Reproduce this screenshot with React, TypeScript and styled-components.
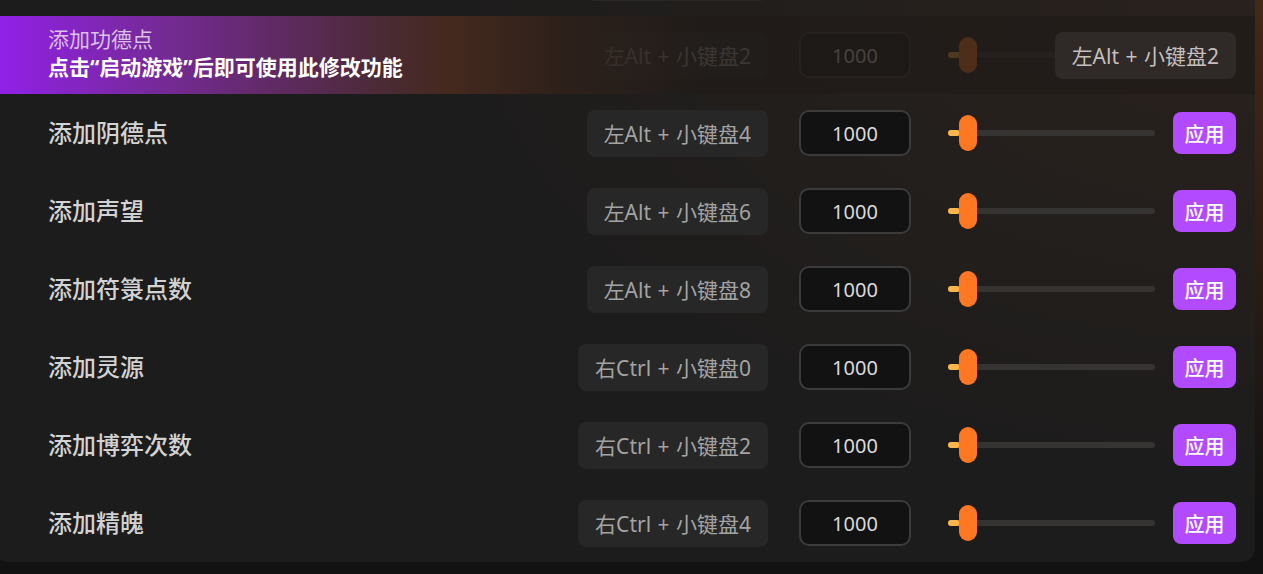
import React, { FC } from 'react';
import styled, { createGlobalStyle } from 'styled-components';

const GlobalStyle = createGlobalStyle`
	html, body {
		margin: 0;
		height: 574px;
		overflow: hidden;
	}
	body {
		font-family: "Noto Sans", "Noto Sans CJK SC", sans-serif;
		background:
			radial-gradient(ellipse 900px 520px at 100% 0%, rgba(110, 58, 28, 0.55), rgba(110, 58, 28, 0) 100%),
			#121212;
	}
`

interface Cheat {
	label: string
	hotkey: string
	value: number
}

const cheats: Cheat[] = [
	{ label: '添加修为', hotkey: '左Alt + 小键盘0', value: 1000 },
	{ label: '添加功德点', hotkey: '左Alt + 小键盘2', value: 1000 },
	{ label: '添加阴德点', hotkey: '左Alt + 小键盘4', value: 1000 },
	{ label: '添加声望', hotkey: '左Alt + 小键盘6', value: 1000 },
	{ label: '添加符箓点数', hotkey: '左Alt + 小键盘8', value: 1000 },
	{ label: '添加灵源', hotkey: '右Ctrl + 小键盘0', value: 1000 },
	{ label: '添加博弈次数', hotkey: '右Ctrl + 小键盘2', value: 1000 },
	{ label: '添加精魄', hotkey: '右Ctrl + 小键盘4', value: 1000 },
]

// index of the row the guide tooltip points at
const GUIDE_ROW = 1

const Slider: FC<{ percent: number }> = ({ percent }) => (
	<SliderWrapper>
		<div className="track" />
		<div className="fill" style={{ width: `${percent}%` }} />
		<div className="thumb" style={{ left: `calc(${percent}% - 1px)` }} />
	</SliderWrapper>
)

const App: FC = () => {
	return (
		<>
			<GlobalStyle />
			<Panel>
				{cheats.map((item, i) => (
					<Row key={i}>
						<Label>{item.label}</Label>
						<HotkeyBadge>{item.hotkey}</HotkeyBadge>
						<ValueBox>{item.value}</ValueBox>
						<Slider percent={6} />
						<ApplyButton>应用</ApplyButton>

						{i === GUIDE_ROW && (
							<GuideOverlay>
								<GuideText>
									<p className="title">{item.label}</p>
									<p className="desc">点击“启动游戏”后即可使用此修改功能</p>
								</GuideText>
								<HotkeyBadge highlight>{item.hotkey}</HotkeyBadge>
							</GuideOverlay>
						)}
					</Row>
				))}
			</Panel>
		</>
	)
}

export default App;



const Panel = styled.div`
	margin: -62px 0 0 -6px;
	width: 1261px;
	background: rgba(32, 32, 32, 0.72);
	border-radius: 0 0 14px 14px;
	overflow: hidden;
`

const Row = styled.div`
	position: relative;
	display: flex;
	align-items: center;
	height: 78px;
	padding: 0 19px 0 54px;
	box-sizing: border-box;
`

const Label = styled.div`
	flex: 1;
	padding-bottom: 3px;
	color: #d2d2d2;
	font-size: 24px;
	font-weight: 500;
	font-family: "Noto Sans CJK SC", sans-serif;
`

const HotkeyBadge = styled.div<{ highlight?: boolean }>`
	display: flex;
	align-items: center;
	height: 47px;
	padding: 0 17px;
	box-sizing: border-box;
	border-radius: 8px;
	background: ${p => p.highlight ? '#2f2a28' : '#272727'};
	color: ${p => p.highlight ? '#c4bfbc' : '#a3a3a3'};
	font-size: 21px;
	white-space: nowrap;
	word-spacing: 1px;
`

const ValueBox = styled.div`
	display: flex;
	align-items: center;
	justify-content: center;
	width: 112px;
	height: 46px;
	margin-left: 31px;
	box-sizing: border-box;
	border: 2px solid #3b3b3b;
	border-radius: 10px;
	background: #121212;
	color: #dadada;
	font-size: 20px;
`

const SliderWrapper = styled.div`
	position: relative;
	width: 207px;
	height: 36px;
	margin-left: 37px;

	& .track {
		position: absolute;
		left: 0;
		right: 0;
		top: 15px;
		height: 6px;
		border-radius: 3px;
		background: #363433;
	}

	& .fill {
		position: absolute;
		left: 0;
		top: 15px;
		height: 6px;
		border-radius: 3px;
		background: #ffb54a;
	}

	& .thumb {
		position: absolute;
		top: 0;
		width: 18px;
		height: 36px;
		border-radius: 9px;
		background: #ff7722;
	}
`

const ApplyButton = styled.button`
	width: 63px;
	height: 42px;
	margin-left: 18px;
	padding: 0;
	border: none;
	border-radius: 8px;
	background: #b24bff;
	color: #ffffff;
	font-family: "Noto Sans CJK SC", sans-serif;
	font-size: 20px;
	font-weight: 500;
	cursor: pointer;
`

const GuideOverlay = styled.div`
	position: absolute;
	inset: 0;
	display: flex;
	align-items: center;
	padding: 0 19px 0 54px;
	background: linear-gradient(90deg,
		#9220ea 0%,
		#762a98 13%,
		#5c2a5a 24%,
		#4a2a34 31%,
		#45291e 36%,
		rgba(44, 32, 26, 0.93) 46%,
		rgba(32, 27, 24, 0.8) 56%,
		rgba(32, 27, 24, 0.8) 100%);
`

const GuideText = styled.div`
	flex: 1;
	padding-bottom: 4px;
	font-family: "Noto Sans", "Noto Sans CJK SC", sans-serif;

	& p {
		margin: 0;
		line-height: 28px;
	}

	& .title {
		color: rgba(255, 255, 255, 0.72);
		font-size: 21px;
	}

	& .desc {
		color: #ffffff;
		font-size: 21px;
		font-weight: 700;
	}
`
